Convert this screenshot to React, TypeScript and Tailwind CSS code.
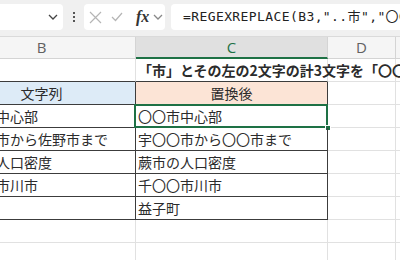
import React from "react";

const cjk = '"Noto Sans CJK JP", "Noto Sans", sans-serif';

function Chevron({ className }: { className?: string }) {
  return (
    <svg width="10" height="6" viewBox="0 0 10 6" className={className}>
      <path d="M1 1 L5 5 L9 1" fill="none" stroke="currentColor" strokeWidth="1.3" />
    </svg>
  );
}

const TB = "border-[#3c3c3c]";

export default function App() {
  const rows: {
    b: string;
    c: string;
    table?: boolean;
    selected?: boolean;
    header?: boolean;
    bold?: boolean;
  }[] = [
    { b: "", c: "「市」とその左の2文字の計3文字を「〇〇市」に置き換える", bold: true },
    { b: "文字列", c: "置換後", header: true, table: true },
    { b: "足利市中心部", c: "〇〇市中心部", table: true, selected: true },
    { b: "宇都宮市から佐野市まで", c: "宇〇〇市から〇〇市まで", table: true },
    { b: "蕨市の人口密度", c: "蕨市の人口密度", table: true },
    { b: "千葉県市川市", c: "千〇〇市川市", table: true },
    { b: "益子町", c: "益子町", table: true },
    { b: "", c: "" },
    { b: "", c: "" },
  ];

  return (
    <div
      className="relative w-[400px] h-[260px] overflow-hidden bg-white text-[#2b2b2b]"
      style={{ fontFamily: cjk }}
    >
      {/* Formula toolbar */}
      <div className="flex h-[37px] items-start overflow-hidden bg-[#f0f0f0] pt-[4px] border-b border-[#dadada]">
        <div className="ml-[-20px] flex h-[26px] w-[83px] shrink-0 items-center justify-end rounded-[4px] bg-white pr-[5px] text-[#444]">
          <Chevron />
        </div>
        <div className="flex h-[26px] w-[21px] shrink-0 flex-col items-center justify-center gap-[2px]">
          <span className="block h-[2px] w-[2px] bg-[#555]" />
          <span className="block h-[2px] w-[2px] bg-[#555]" />
          <span className="block h-[2px] w-[2px] bg-[#555]" />
        </div>
        <div className="flex h-[26px] w-[81px] shrink-0 items-center rounded-[4px] bg-white">
          <svg width="13" height="13" viewBox="0 0 13 13" className="ml-[5px] shrink-0">
            <path d="M1 1 L12 12 M12 1 L1 12" stroke="#b5b5b5" strokeWidth="1.2" />
          </svg>
          <svg width="12" height="10" viewBox="0 0 12 10" className="ml-[9px] shrink-0">
            <path d="M1 5 L4.5 8.5 L11 1" fill="none" stroke="#b5b5b5" strokeWidth="1.2" />
          </svg>
          <span
            className="ml-[13px] text-[16px] font-bold italic leading-none text-[#333]"
            style={{ fontFamily: '"Liberation Serif", serif' }}
          >
            fx
          </span>
          <Chevron className="ml-[4px] shrink-0 text-[#888]" />
        </div>
        <div className="ml-[6px] flex h-[26px] min-w-0 flex-1 items-center overflow-hidden rounded-l-[4px] bg-white pl-[12px]">
          <span
            className="whitespace-nowrap text-[13px] tracking-[0.4px] text-[#222]"
            style={{ fontFamily: '"DejaVu Sans Mono", "Noto Sans CJK JP", monospace' }}
          >
            =REGEXREPLACE(B3,"..市","〇〇市")
          </span>
        </div>
      </div>

      {/* Sheet */}
      <div className="ml-[-52px] flex flex-col">
        {/* Column headers */}
        <div className="flex h-[22px] text-[15px] text-[#616161]" style={{ fontFamily: '"Open Sans", sans-serif' }}>
          <div className="flex w-[188px] shrink-0 items-center justify-center border-r border-b border-[#d4d4d4] bg-[#f5f5f5]">
            B
          </div>
          <div className="flex w-[192px] shrink-0 items-center justify-center border-r border-[#d4d4d4] border-b-2 border-b-[#1e7145] bg-[#e0e0e0] text-[#1e7145]">
            C
          </div>
          <div className="flex w-[68px] shrink-0 items-center justify-center border-r border-b border-[#d4d4d4] bg-[#f5f5f5]">
            D
          </div>
          <div className="flex-1 border-b border-[#d4d4d4] bg-[#f5f5f5]" />
        </div>

        {rows.map((r, i) => {
          const next = rows[i + 1];
          const bottomDark = r.table || (next && next.table);
          const bCls = [
            "flex w-[188px] shrink-0 items-center overflow-hidden whitespace-nowrap border-b",
            r.table ? `border-r ${TB}` : "border-r border-r-[#e1e1e1]",
            bottomDark ? "border-b-[#3c3c3c]" : "border-b-[#e1e1e1]",
            r.header ? "justify-center bg-[#ddebf7]" : "pl-[6px]",
          ].join(" ");
          const cCls = [
            "relative flex w-[192px] shrink-0 items-center whitespace-nowrap border-b",
            r.table ? `border-r ${TB}` : "border-r border-r-[#e1e1e1]",
            bottomDark ? "border-b-[#3c3c3c]" : "border-b-[#e1e1e1]",
            r.header ? "justify-center bg-[#fce4d6]" : "pl-[2px]",
            r.bold ? "z-10 font-bold" : "",
          ].join(" ");
          return (
            <div key={i} className="flex h-[23px] text-[14px]">
              <div className={bCls}>{r.b}</div>
              <div className={cCls}>
                {r.c}
                {r.selected && (
                  <>
                    <div className="pointer-events-none absolute left-[-2px] top-[-1px] right-[-1px] bottom-[-1px] border-2 border-[#1e7145]" />
                    <div className="absolute right-[-4px] bottom-[-4px] h-[6px] w-[6px] border border-white bg-[#1e7145]" />
                  </>
                )}
              </div>
              <div className="w-[68px] shrink-0 border-r border-b border-[#e1e1e1]" />
              <div className="flex-1 border-b border-[#e1e1e1]" />
            </div>
          );
        })}
      </div>
    </div>
  );
}
